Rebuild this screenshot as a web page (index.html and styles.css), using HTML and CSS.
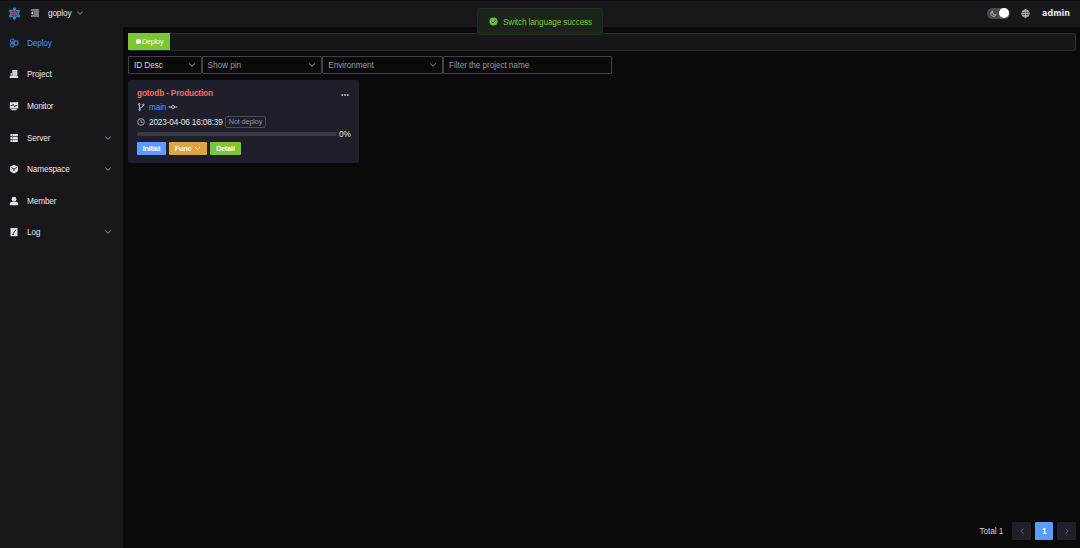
FILE: index.html
```html
<!DOCTYPE html>
<html lang="en">
<head>
    <meta charset="UTF-8">
    <meta name="viewport" content="width=device-width, initial-scale=1.0">
    <title>Goploy</title>
    <link rel="stylesheet" href="styles.css">
</head>
<body>
    <!-- Shared icons -->
    <svg class="icon-defs" width="0" height="0">
        <symbol id="arrow-down" viewBox="0 0 8 8">
            <path d="M1.2 2.6 4 5.3 6.8 2.6" fill="none" stroke="currentColor" stroke-width="0.9"/>
        </symbol>
    </svg>

    <div class="app">
        <!-- Top bar -->
        <header class="navbar">
            <svg class="logo" viewBox="0 0 24 24">
                <g fill="#2f80b8">
                    <circle cx="12" cy="3.5" r="3"/><circle cx="19.5" cy="7.5" r="3"/>
                    <circle cx="19.5" cy="16.5" r="3"/><circle cx="12" cy="20.5" r="3"/>
                    <circle cx="4.5" cy="16.5" r="3"/><circle cx="4.5" cy="7.5" r="3"/>
                </g>
                <path d="M12 4 19 8v8l-7 4-7-4V8z" fill="#1c4868" stroke="#3f9bd0" stroke-width="1.6"/>
                <path d="M12 4v16M5 8l14 8M19 8 5 16" stroke="#3f9bd0" stroke-width="1.2"/>
                <circle cx="12" cy="12" r="4" fill="#e01f60"/>
            </svg>
            <svg class="hamburger" viewBox="0 0 10 10">
                <path d="M1 2h8M3.500 4h5.500M3.500 6h5.500M1 8h8" stroke="#dcdde2" stroke-width="1.2"/>
                <path d="M3 3.3v3.4L.9 5z" fill="#dcdde2"/>
            </svg>
            <span class="namespace">goploy</span>
            <svg class="arrow"><use href="#arrow-down"/></svg>
            <div class="navbar-right">
                <span class="theme-switch">
                    <svg viewBox="0 0 10 10"><path d="M3.7 1.4A4 4 0 1 0 8.8 6.8 4 4 0 0 1 3.7 1.4z" fill="none" stroke="#c4c6cc" stroke-width="1.2"/></svg>
                    <i class="knob"></i>
                </span>
                <svg class="globe" viewBox="0 0 10 10" fill="none" stroke="#c8c9ce" stroke-width="0.8">
                    <circle cx="5" cy="5" r="4.2"/><ellipse cx="5" cy="5" rx="2" ry="4.2"/>
                    <path d="M5 .8v8.4M.8 5h8.4M1.5 2.9h7M1.5 7.1h7"/>
                </svg>
                <span class="user">admin</span>
            </div>
        </header>

        <div class="layout">
            <!-- Sidebar menu -->
            <nav class="sidebar">
                <a class="menu-item active">
                    <svg viewBox="0 0 10 10" fill="none" stroke="currentColor" stroke-width="1.1">
                        <circle cx="3.2" cy="2.8" r="1.8"/><circle cx="3.2" cy="7.2" r="1.8"/><circle cx="7" cy="5" r="2.1"/><circle cx="4.2" cy="5" r="1.2"/>
                    </svg>
                    <span>Deploy</span>
                </a>
                <a class="menu-item">
                    <svg viewBox="0 0 10 10" fill="currentColor">
                        <path d="M3.3 1h5v5.8h-5zM1.6 4h1.2v2.8H1.6zM.8 7h8.4v2H.8z"/>
                        <path d="M4.5 2.7h2.6M4.5 4.7h2.6" stroke="#85868c" stroke-width=".6"/>
                    </svg>
                    <span>Project</span>
                </a>
                <a class="menu-item">
                    <svg viewBox="0 0 10 10">
                        <path d="M.8 1.2h8.4v6.4H.8zM2.4 8h5.2v1.2H2.4z" fill="currentColor"/>
                        <path d="M1.5 4.6h1.7l1-1.3L5.7 6l.9-1.4h1.9" fill="none" stroke="#18181c" stroke-width=".9"/>
                    </svg>
                    <span>Monitor</span>
                </a>
                <a class="menu-item">
                    <svg viewBox="0 0 10 10">
                        <path d="M1.4 1h7.4v2.3H1.4zM1.4 3.9h7.4v2.3H1.4zM1.4 6.8h7.4v2.3H1.4z" fill="currentColor"/>
                        <path d="M3.3 1v8" stroke="#66676d" stroke-width=".7"/>
                    </svg>
                    <span>Server</span>
                    <svg class="arrow"><use href="#arrow-down"/></svg>
                </a>
                <a class="menu-item">
                    <svg viewBox="0 0 10 10">
                        <path d="M5 .7 8.9 2.8v4.4L5 9.4 1.1 7.2V2.8z" fill="currentColor"/>
                        <path d="M2.5 3.6 5 5l2.5-1.4M5 5v2" fill="none" stroke="#18181c" stroke-width=".9"/>
                    </svg>
                    <span>Namespace</span>
                    <svg class="arrow"><use href="#arrow-down"/></svg>
                </a>
                <a class="menu-item">
                    <svg viewBox="0 0 10 10" fill="currentColor">
                        <circle cx="5" cy="3.2" r="2.4"/><path d="M.8 9.2V8c0-1.500 1.300-2.300 2.600-2.300h3.200C7.900 5.700 9.200 6.500 9.200 8v1.200z"/>
                    </svg>
                    <span>Member</span>
                </a>
                <a class="menu-item">
                    <svg viewBox="0 0 10 10">
                        <path d="M1.500 1h7v8.200h-7z" fill="currentColor"/>
                        <path d="M6.800 2.800 4 6.800M3.300 7.500h1.500" stroke="#18181c" stroke-width="1"/>
                    </svg>
                    <span>Log</span>
                    <svg class="arrow"><use href="#arrow-down"/></svg>
                </a>
            </nav>

            <main class="main">
                <!-- Tabs -->
                <div class="tabs">
                    <span class="tab"><i class="dot"></i>Deploy</span>
                </div>

                <!-- Filters -->
                <div class="filters">
                    <div class="select sort">ID Desc<svg class="arrow"><use href="#arrow-down"/></svg></div>
                    <div class="select">Show pin<svg class="arrow"><use href="#arrow-down"/></svg></div>
                    <div class="select">Environment<svg class="arrow"><use href="#arrow-down"/></svg></div>
                    <input class="search" type="text" placeholder="Filter the project name">
                </div>

                <!-- Project card -->
                <section class="card">
                    <div class="card-title">
                        <span>gotodb - Production</span>
                        <svg class="more" viewBox="0 0 8 4" fill="#c9cad2"><circle cx="1.200" cy="2" r=".9"/><circle cx="4" cy="2" r=".9"/><circle cx="6.800" cy="2" r=".9"/></svg>
                    </div>
                    <div class="card-line">
                        <svg class="line-icon" viewBox="0 0 8 8" fill="none" stroke="#d6d7df" stroke-width=".9">
                            <circle cx="2.200" cy="1.300" r=".8"/><circle cx="2.700" cy="6.700" r=".8"/><circle cx="6.300" cy="1.800" r=".8"/>
                            <path d="M2.300 2.100 2.600 5.900M6.200 2.700C6 4.600 3 4.200 2.700 5.800"/>
                        </svg>
                        <span class="branch">main</span>
                        <svg class="commit" viewBox="0 0 10 8" fill="none" stroke="#d6d7df" stroke-width=".9"><circle cx="5" cy="4" r="1.500"/><path d="M.5 4h3M6.500 4h3"/></svg>
                    </div>
                    <div class="card-line">
                        <svg class="line-icon" viewBox="0 0 8 8" fill="none" stroke="#c3c4cc" stroke-width=".8"><circle cx="4" cy="4" r="3.300"/><path d="M4 2v2.300h1.700"/></svg>
                        <span class="time">2023-04-06 16:08:39</span>
                        <span class="tag">Not deploy</span>
                    </div>
                    <div class="progress">
                        <div class="progress-bar"></div>
                        <span>0%</span>
                    </div>
                    <div class="actions">
                        <button class="btn primary">Initial</button>
                        <button class="btn warning">Func<svg class="arrow"><use href="#arrow-down"/></svg></button>
                        <button class="btn success">Detail</button>
                    </div>
                </section>

                <!-- Pagination -->
                <div class="pagination">
                    <span class="total">Total 1</span>
                    <span class="page"><svg viewBox="0 0 8 8"><path d="M5.300 1.500 2.800 4l2.500 2.500"/></svg></span>
                    <span class="page current">1</span>
                    <span class="page"><svg viewBox="0 0 8 8"><path d="M2.700 1.500 5.200 4 2.700 6.500"/></svg></span>
                </div>
            </main>
        </div>
    </div>

    <!-- Success message -->
    <div class="message">
        <svg viewBox="0 0 10 10"><circle cx="5" cy="5" r="4.500" fill="#67c23a"/><path d="M2.900 5.100 4.500 6.600 7.200 3.600" fill="none" stroke="#1d271b" stroke-width="1.100"/></svg>
        <span>Switch language success</span>
    </div>
</body>
</html>
```

FILE: styles.css
```css
* {
    box-sizing: border-box;
}

body {
    margin: 0;
    background-color: #0a0a0a;
    color: #e3e4ea;
    font-family: "Liberation Sans", Arial, sans-serif;
    font-size: 8.3px;
    line-height: 10px;
    letter-spacing: -0.18px;
}

.icon-defs {
    position: absolute;
}

svg {
    display: block;
    flex-shrink: 0;
}

.arrow {
    width: 8px;
    height: 8px;
    color: #a3a6ad;
}

.app {
    display: flex;
    flex-direction: column;
    height: 548px;
}

/* Top bar */
.navbar {
    display: flex;
    align-items: center;
    height: 27px;
    padding: 0 10px 2px 8px;
    background-color: #18181c;
    border-top: 1px solid #0e0e12;
}

.logo {
    width: 13px;
    height: 13px;
}

.hamburger {
    width: 10px;
    height: 10px;
    margin-left: 9px;
}

.namespace {
    margin: 0 5px 0 8px;
}

.navbar-right {
    display: flex;
    align-items: center;
    margin-left: auto;
}

.theme-switch {
    display: flex;
    align-items: center;
    justify-content: space-between;
    width: 23px;
    height: 11px;
    padding: 0 1px 0 3px;
    border-radius: 6px;
    background-color: #484a50;
}

.theme-switch svg {
    width: 7px;
    height: 7px;
}

.knob {
    width: 10px;
    height: 10px;
    border-radius: 50%;
    background-color: #fff;
}

.globe {
    width: 9px;
    height: 9px;
    margin: 0 12px 0 11px;
}

.user {
    padding-top: 1px;
    font-family: "DejaVu Sans", Verdana, sans-serif;
    font-size: 8px;
    font-weight: bold;
    letter-spacing: 0;
}

.layout {
    display: flex;
    flex: 1;
}

/* Sidebar */
.sidebar {
    width: 123px;
    background-color: #18181c;
}

.menu-item {
    display: flex;
    align-items: center;
    height: 31.6px;
    padding: 0 11px 0 9px;
}

.menu-item svg:first-child {
    width: 10px;
    height: 10px;
    margin-right: 8px;
}

.menu-item .arrow {
    margin-left: auto;
}

.menu-item.active {
    color: #4b96ff;
}

.menu-item.active svg {
    color: #3f78c4;
}

/* Main */
.main {
    display: flex;
    flex: 1;
    flex-direction: column;
    padding: 6px 4px 8px 5px;
}

.tabs {
    height: 18px;
    border: 1px solid #2c2c2a;
    border-radius: 2px;
    background-color: #17171a;
}

.tab {
    display: flex;
    align-items: center;
    width: 42px;
    height: 17px;
    margin: -1px 0 0 -1px;
    padding-left: 8px;
    background-color: #7cc636;
    color: #fff;
    font-size: 7.2px;
}

.dot {
    width: 5px;
    height: 5px;
    margin-right: 1px;
    border-radius: 50%;
    background-color: #fff;
}

.filters {
    display: flex;
    margin-top: 5px;
}

.select,
.search {
    display: flex;
    align-items: center;
    justify-content: space-between;
    width: 120.7px;
    height: 18px;
    padding: 0 5px;
    border: 1px solid #41414d;
    border-radius: 1px;
    background-color: transparent;
    color: #94969b;
    letter-spacing: -0.1px;
}

.select.sort {
    width: 73.6px;
    color: #d5d6dc;
}

.search {
    width: 169px;
    font: inherit;
}

.search::placeholder {
    color: #94969b;
}

/* Project card */
.card {
    width: 231px;
    height: 83px;
    margin-top: 6px;
    padding: 8px 8px 0 9px;
    border-radius: 2px;
    background-color: #1f1f2b;
}

.card-title {
    display: flex;
    align-items: center;
    justify-content: space-between;
    color: #f56c6c;
    font-weight: bold;
}

.more {
    width: 8px;
    height: 4px;
    margin: 3px 2px 0 0;
}

.card-line {
    display: flex;
    align-items: center;
    height: 14.5px;
}

.card-title + .card-line {
    margin-top: 2px;
}

.line-icon {
    width: 8px;
    height: 8px;
    margin-right: 4px;
}

.branch {
    color: #4b96ff;
}

.commit {
    width: 10px;
    height: 8px;
    margin-left: 2px;
}

.time {
    width: 74px;
    white-space: nowrap;
}

.tag {
    width: 41px;
    height: 12px;
    margin-left: 2px;
    border: 1px solid #4a4a53;
    border-radius: 2px;
    color: #92949c;
    font-size: 7.2px;
    letter-spacing: -0.1px;
    text-align: center;
    white-space: nowrap;
}

.progress {
    display: flex;
    align-items: center;
    height: 10px;
}

.progress-bar {
    width: 200px;
    height: 4px;
    margin-right: 2px;
    border-radius: 2px;
    background-color: #393945;
}

.actions {
    display: flex;
    gap: 3px;
    margin-top: 3px;
}

.btn {
    display: flex;
    align-items: center;
    justify-content: center;
    height: 13px;
    padding: 0;
    border: none;
    border-radius: 1px;
    color: #fff;
    font-family: inherit;
    font-size: 7.2px;
    font-weight: bold;
    letter-spacing: -0.2px;
}

.btn.primary {
    width: 29px;
    background-color: #5b9cff;
}

.btn.warning {
    width: 38px;
    background-color: #dfa344;
}

.btn.warning .arrow {
    width: 7px;
    height: 7px;
    margin-left: 3px;
    color: #f6e4c4;
}

.btn.success {
    width: 31px;
    background-color: #7cc636;
}

/* Pagination */
.pagination {
    display: flex;
    align-items: center;
    justify-content: flex-end;
    gap: 4px;
    margin-top: auto;
}

.total {
    margin-right: 5px;
    color: #cfd0d6;
    letter-spacing: -0.1px;
}

.page {
    display: flex;
    align-items: center;
    justify-content: center;
    width: 18.6px;
    height: 18px;
    border-radius: 1px;
    background-color: #20202a;
}

.page svg {
    width: 8px;
    height: 8px;
    fill: none;
    stroke: #65666f;
    stroke-width: 0.9;
}

.page.current {
    background-color: #5b9cff;
    color: #fff;
    font-weight: bold;
}

/* Success message */
.message {
    position: absolute;
    top: 8px;
    left: 477px;
    display: flex;
    align-items: center;
    width: 126px;
    height: 27px;
    padding-left: 11px;
    border: 1px solid #1f2d1b;
    border-radius: 2px;
    background-color: #1c221c;
    color: #6cc83c;
}

.message svg {
    width: 9px;
    height: 9px;
    margin-right: 5px;
}
```
